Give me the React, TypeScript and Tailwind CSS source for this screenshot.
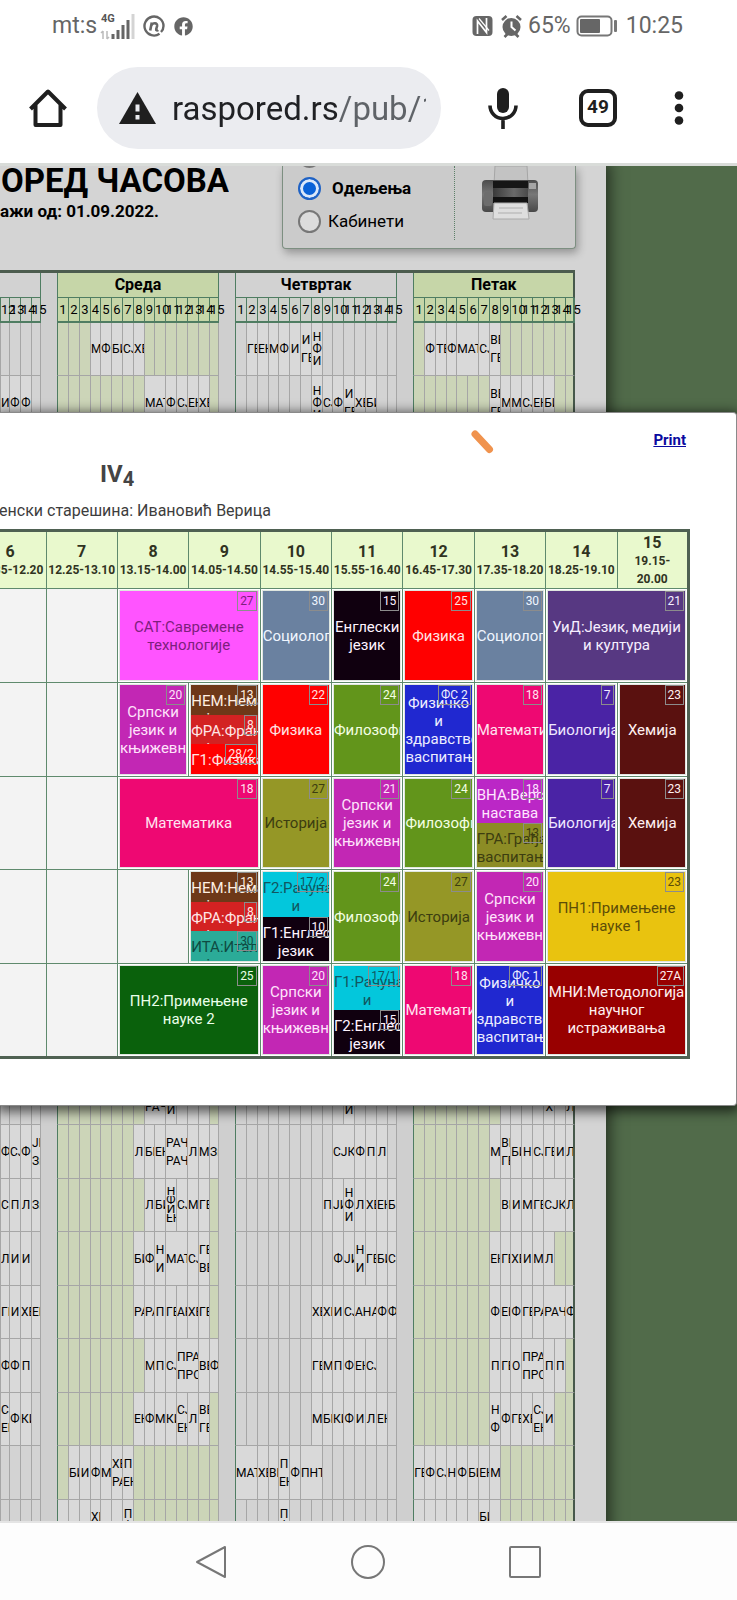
import React from "react";
import { FaFacebook } from "react-icons/fa";

type Slot = [start: number, span: number, text: string];
type Day = { filled: [number, number]; slots: Slot[] };
type Row = [Day, Day, Day, Day];

const day = (from: number, to: number, ...slots: Slot[]): Day => ({ filled: [from, to], slots });
/** Builds single-column slots that follow each other from the given lesson; "*" marks a double lesson. */
const run = (start: number, texts: string): Slot[] => {
  let at = start;
  return texts.split(" ").map((t) => {
    const span = t.startsWith("*") ? 2 : 1;
    const slot: Slot = [at, span, t.replace("*", "")];
    at += span;
    return slot;
  });
};
const lessons = (start: number, texts: string): Day => {
  const slots = run(start, texts);
  const last = slots[slots.length - 1];
  return day(start, last[0] + last[1] - 1, ...slots);
};
const none: Day = { filled: [0, -1], slots: [] };
const blank: Row = [none, none, none, none];

const rows: Row[] = [
  [none, lessons(4, "М Ф БИ СЈ ХЕ"), lessons(2, "ГЕ ЕН М Ф И И|ГЕ Н|Ф|И"), lessons(2, "Ф ТЕ Ф *МАТ СЈ ВЕ|ГЕ")],
  [lessons(12, "И Ф Ф"), lessons(9, "*МАТ Ф СЈ ЕН ХЕ"), lessons(8, "Н|Ф|И СЈ Ф И|ГЕ ХЕ БИ"), lessons(8, "ВЕ|ГЕ М М СЈ ЕН БИ")],
  ...Array.from({ length: 12 }, () => blank),
  [none, day(9, 14, [9, 2, "РАЧ|РАЧ"], [11, 1, "Н|Ф|И"]), day(0, -1, [11, 1, "Н|Ф|И"]), day(9, 15, [13, 1, "И|Х"], [15, 1, "И|Л"])],
  [lessons(12, "Ф СЈ Ф ЈИ|Зи"), lessons(8, "Л БИ ЕН *РАЧ|РАЧ Л М Зи"), lessons(10, "*СЈК Ф П Л"), lessons(8, "М ВЕ|ГЕ БИ Н СЈ ГЕ И Л")],
  [lessons(12, "СЈ П Л Зи"), lessons(9, "Л БИ Н|Ф|И|ЕН СЈ М ГЕ"), lessons(9, "П ЈИ Н|Ф|И Л ХЕ ЕН БИ"), lessons(9, "ВЕ И М ГЕ *СЈК Л")],
  [lessons(12, "Л И И"), lessons(8, "БИ Ф Н|И *МАТ СЈ ГЕ|ВЕ"), lessons(10, "Ф ЈИ Н|И ГЕ БИ СЈ"), lessons(8, "ЕН ГЕ ХЕ И М Л")],
  [lessons(12, "ГЕ И ХЕ ЕН"), lessons(8, "РА РА П ГЕ АН ХЕ ГЕ"), lessons(8, "ХЕ ХЕ И СЈ *АНА Ф Ф"), lessons(8, "Ф ЕН Ф ГЕ РА *РАЧ Ф")],
  [lessons(12, "Ф Ф П"), lessons(9, "М П СЈ *ПРА|ПРО ВЕ Ф"), lessons(8, "ГЕ М П Ф ЕН СЈ"), lessons(8, "П ГЕ О *ПРА|ПРО П П")],
  [lessons(12, "СЈ|ЕН Ф КИ"), lessons(8, "ЕН Ф М КИ СЈ|ЕН Л ВЕ|ГЕ"), lessons(8, "М БИ КИ Ф И Л ЕН"), lessons(8, "Н|Ф Ф ГЕ ХЕ СЈ|ЕН И")],
  [none, lessons(2, "БИ И Ф М ХЕ|РА П|ЕН"), lessons(1, "*МАТ ХЕ ВЕ П|ЕН Ф *ПНТ"), lessons(1, "ГЕ Ф СЈ Н Ф БИ ЕН М")],
  [none, day(1, 7, [4, 1, "ХЕ|ГЕ"], [7, 1, "П|Ф|И"]), day(0, -1, [5, 1, "П|Ф|И"]), day(1, 8, [7, 1, "БИ|ГЕ"])],
];

const days = [
  { name: "", first: 12, green: false },
  { name: "Среда", first: 1, green: true },
  { name: "Четвртак", first: 1, green: false },
  { name: "Петак", first: 1, green: true },
];

const narrowColumns = [4, 9, 15];

function lineHeight(count: number) {
  if (count <= 2) return "leading-[18px]";
  return count === 3 ? "leading-[12px]" : "leading-[9px]";
}

function DayCells({ data, index }: { data: Day; index: number }) {
  const { first, green } = days[index];
  const cells: React.ReactNode[] = [];
  for (let c = first; c <= 15; ) {
    const slot = data.slots.find((s) => s[0] === c);
    const span = slot ? slot[1] : 1;
    const filled = (c >= data.filled[0] && c <= data.filled[1]) || !!slot;
    const lines = slot ? slot[2].split("|") : [];
    const bg = filled ? "bg-[#d9d9d9]" : green ? "bg-[#ccd5b8]" : "bg-[#d3d3d3]";
    const left = c === 1 ? "border-l-[#4f7d62]" : "border-l-[#a6a6a6]";
    const last = c + span > 15;
    const right = last ? (index === 3 ? "border-r-2 border-r-[#47594b]" : "border-r border-r-[#a6a6a6]") : "";
    cells.push(
      <td key={c} colSpan={span} className={`overflow-hidden border-b border-l border-b-[#a6a6a6] p-0 text-center ${bg} ${left} ${right}`}>
        {lines.map((l, i) => (
          <div key={i} className={`overflow-hidden whitespace-nowrap ${lineHeight(lines.length)}`}>{l}</div>
        ))}
      </td>
    );
    c += span;
  }
  return <>{cells}</>;
}

function WeekTable() {
  return (
    <table className="w-[575px] table-fixed border-separate border-spacing-0 border-t-3 border-[#4c5c4e] text-[12px] text-black">
      <colgroup>
        {days.map((d, i) => (
          <React.Fragment key={i}>
            {i > 0 && <col className="w-[16px]" />}
            {Array.from({ length: 16 - d.first }, (_, k) => {
              const n = k + d.first;
              return <col key={n} className={n === 12 && i === 0 ? "w-[9px]" : narrowColumns.includes(n) ? "w-[10px]" : "w-[11px]"} />;
            })}
          </React.Fragment>
        ))}
      </colgroup>
      <thead>
        <tr className="h-[25px]">
          {days.map((d, i) => (
            <React.Fragment key={i}>
              {i > 0 && <td className="bg-[#cfcfcf] p-0" />}
              <th
                colSpan={16 - d.first}
                className={`border-b border-l border-r border-[#4f7d62] p-0 text-[16px] leading-6 font-bold ${d.green ? "bg-[#c6d6a8]" : "bg-[#d2d2d2]"} ${i === 0 ? "border-l-0" : ""} ${i === 3 ? "border-r-2 border-r-[#47594b]" : ""}`}
              >
                {d.name}
              </th>
            </React.Fragment>
          ))}
        </tr>
        <tr className="h-[25px]">
          {days.map((d, i) => (
            <React.Fragment key={i}>
              {i > 0 && <td className="bg-[#cfcfcf] p-0" />}
              {Array.from({ length: 16 - d.first }, (_, k) => {
                const n = k + d.first;
                return (
                  <th
                    key={n}
                    className={`border-b-2 border-l border-[#4f7d62] p-0 text-center text-[13px] font-normal whitespace-nowrap ${d.green ? "bg-[#c6d6a8]" : "bg-[#cdd1cb]"} ${n === 15 ? (i === 3 ? "border-r-2" : "border-r") : ""}`}
                  >
                    {n}
                  </th>
                );
              })}
            </React.Fragment>
          ))}
        </tr>
      </thead>
      <tbody>
        {rows.map((row, r) => (
          <tr key={r} className="odd:h-[53px] even:h-[54px]">
            {row.map((data, i) => (
              <React.Fragment key={i}>
                {i > 0 && <td className="bg-[#cfcfcf] p-0" />}
                <DayCells data={data} index={i} />
              </React.Fragment>
            ))}
          </tr>
        ))}
      </tbody>
    </table>
  );
}

type Lesson = { text: string; room: string; color: string };
const L = (text: string, room: string, color: string): Lesson => ({ text, room, color });

const srp = (room: string) => L("Српски језик и књижевност", room, "bg-[#c227b4] text-[#ffe3fb]");
const fiz = (room: string) => L("Физика", room, "bg-[#ff0000] text-[#ffe3e3]");
const fil = L("Филозофија", "24", "bg-[#62951b] text-[#f4ffe3]");
const mat = L("Математика", "18", "bg-[#ee0872] text-[#ffe3f0]");
const ist = L("Историја", "27", "bg-[#959726] text-[#3c3d10]");
const bio = L("Биологија", "7", "bg-[#4a23a5] text-[#efe8ff]");
const hem = L("Хемија", "23", "bg-[#5a110f] text-[#fff0f0]");
const soc = L("Социологија", "30", "bg-[#6a81a0] text-[#f0f6ff]");
const fizv = (room: string) => L("Физичко и здравствено васпитање", room, "bg-[#2028d0] text-[#eeeeff]");
const nem = L("НЕМ:Немачки језик", "13", "bg-[#6e3818] text-[#fff0e4]");
const fra = L("ФРА:Француски језик", "8", "bg-[#d32222] text-[#ffe6e6]");
const eng = "bg-[#10000f] text-[#fff4ff]";
const rac = "bg-[#03c7dc] text-[#115660]";

const week: { span: number; items: Lesson[] }[][] = [
  [
    { span: 1, items: [] }, { span: 1, items: [] },
    { span: 2, items: [L("САТ:Савремене технологије", "27", "bg-[#ff54ff] text-[#7d1f7d]")] },
    { span: 1, items: [soc] },
    { span: 1, items: [L("Енглески језик", "15", eng)] },
    { span: 1, items: [fiz("25")] },
    { span: 1, items: [soc] },
    { span: 2, items: [L("УиД:Језик, медији и култура", "21", "bg-[#573882] text-[#f6efff]")] },
  ],
  [
    { span: 1, items: [] }, { span: 1, items: [] },
    { span: 1, items: [srp("20")] },
    { span: 1, items: [nem, fra, L("Г1:Физика", "28/2", "bg-[#ff0000] text-[#ffe3e3]")] },
    { span: 1, items: [fiz("22")] }, { span: 1, items: [fil] }, { span: 1, items: [fizv("ФС 2")] },
    { span: 1, items: [mat] }, { span: 1, items: [bio] }, { span: 1, items: [hem] },
  ],
  [
    { span: 1, items: [] }, { span: 1, items: [] },
    { span: 2, items: [mat] }, { span: 1, items: [ist] }, { span: 1, items: [srp("21")] }, { span: 1, items: [fil] },
    { span: 1, items: [L("ВНА:Верска настава", "18", "bg-[#bb27c6] text-[#ffe6ff]"), L("ГРА:Грађанско васпитање", "13", "bg-[#8c8c25] text-[#3c3d10]")] },
    { span: 1, items: [bio] }, { span: 1, items: [hem] },
  ],
  [
    { span: 1, items: [] }, { span: 1, items: [] }, { span: 1, items: [] },
    { span: 1, items: [nem, fra, L("ИТА:Италијански језик", "30", "bg-[#2bab98] text-[#0f4a42]")] },
    { span: 1, items: [L("Г2:Рачунарство и", "17/2", rac), L("Г1:Енглески језик", "10", eng)] },
    { span: 1, items: [fil] }, { span: 1, items: [ist] }, { span: 1, items: [srp("20")] },
    { span: 2, items: [L("ПН1:Примењене науке 1", "23", "bg-[#e9c30f] text-[#5c4d08]")] },
  ],
  [
    { span: 1, items: [] }, { span: 1, items: [] },
    { span: 2, items: [L("ПН2:Примењене науке 2", "25", "bg-[#0a610c] text-[#eaffea]")] },
    { span: 1, items: [srp("20")] },
    { span: 1, items: [L("Г1:Рачунарство и", "17/1", rac), L("Г2:Енглески језик", "15", eng)] },
    { span: 1, items: [mat] }, { span: 1, items: [fizv("ФС 1")] },
    { span: 2, items: [L("МНИ:Методологија научног истраживања", "27А", "bg-[#980000] text-[#fff0f0]")] },
  ],
];

const periods: [string, string][] = [
  ["6", "11.35-12.20"], ["7", "12.25-13.10"], ["8", "13.15-14.00"], ["9", "14.05-14.50"], ["10", "14.55-15.40"],
  ["11", "15.55-16.40"], ["12", "16.45-17.30"], ["13", "17.35-18.20"], ["14", "18.25-19.10"], ["15", "19.15- 20.00"],
];

function LessonBlock({ lesson, alone }: { lesson: Lesson; alone: boolean }) {
  return (
    <div className={`relative flex min-h-0 flex-1 basis-0 justify-center overflow-hidden ${alone ? "items-center" : "items-start pt-[7px]"} ${lesson.color}`}>
      <div className="w-full text-center text-[15px] leading-[18px]">{lesson.text}</div>
      <span className="absolute top-0 right-px border border-[#8c8c8c] px-[2px] text-[12px] leading-[18px]">{lesson.room}</span>
    </div>
  );
}

function ClassDialog() {
  return (
    <section
      role="dialog"
      aria-label="IV4"
      className="absolute top-[246px] right-0 left-0 overflow-hidden rounded-r-[4px] border border-l-0 border-[#8a8a8a] bg-white pr-[46px] pb-[46px] shadow-[0_3px_12px_3px_rgba(0,0,0,0.6)]"
    >
      <svg className="absolute top-[15px] left-[470px] h-[28px] w-[26px]" viewBox="0 0 26 28" aria-hidden="true">
        <path d="M5 6 L19.500 21.500" stroke="#f0934e" strokeWidth="7" strokeLinecap="round" />
      </svg>
      <div className="flex justify-end pt-[17px] pr-[4px]">
        <a href="#print" className="text-[15px] leading-5 font-bold text-[#0a0aa0] underline">Print</a>
      </div>
      <h2 className="pt-[10px] pl-[100px] text-[24px] leading-7 font-bold text-[#444]">
        IV<sub className="bottom-[-4px] text-[20px]">4</sub>
      </h2>
      <div className="flex w-[271px] justify-end overflow-hidden pt-[11px] pb-[6px]">
        <p className="shrink-0 text-[16px] leading-6 whitespace-nowrap text-[#3d3d3d]">Одељенски старешина: Ивановић Верица</p>
      </div>
      <table className="w-full table-fixed border-collapse border-t-3 border-r-3 border-b-3 border-[#4f6152]">
        <colgroup>
          <col className="w-[46px]" />
          {periods.slice(1).map(([n]) => <col key={n} />)}
        </colgroup>
        <thead>
          <tr className="h-[58px]">
            {periods.map(([n, time], i) => (
              <th key={n} className={`overflow-hidden border border-[#5f8a6d] bg-[#e9f9cd] p-0 text-[#30331f] ${i === 0 ? "border-l-0" : ""}`}>
                <div className={i === 0 ? "flex justify-end" : ""}>
                  <div className={i === 0 ? "w-[71px] shrink-0" : ""}>
                    <div className="text-[16px] leading-[19px] font-bold">{n}</div>
                    <div className={`text-[12px] leading-[18px] font-bold ${n === "15" ? "px-[4px]" : "whitespace-nowrap"}`}>{time}</div>
                  </div>
                </div>
              </th>
            ))}
          </tr>
        </thead>
        <tbody>
          {week.map((row, r) => (
            <tr key={r} className={r === 2 ? "h-[93px]" : "h-[94px]"}>
              {row.map((cell, c) => (
                <td
                  key={c}
                  colSpan={cell.span}
                  className={`h-[93px] border border-[#5f8a6d] p-[1px] ${cell.items.length ? "bg-white" : "bg-[#f3f3f3]"} ${c === 0 ? "border-l-0" : ""}`}
                >
                  {cell.items.length > 0 && (
                    <div className="flex h-full flex-col border border-[#dfe6df]">
                      {cell.items.map((l, i) => <LessonBlock key={i} lesson={l} alone={cell.items.length === 1} />)}
                    </div>
                  )}
                </td>
              ))}
            </tr>
          ))}
        </tbody>
      </table>
    </section>
  );
}

function Printer() {
  return (
    <svg className="h-[58px] w-[58px]" viewBox="0 0 58 58" aria-hidden="true">
      <defs>
        <linearGradient id="body" x1="0" x2="0" y1="0" y2="1">
          <stop offset="0" stopColor="#4c4c4c" />
          <stop offset="0.45" stopColor="#777" />
          <stop offset="1" stopColor="#484848" />
        </linearGradient>
        <linearGradient id="front" x1="0" x2="1" y1="0" y2="0">
          <stop offset="0" stopColor="#3a3a3a" />
          <stop offset="0.6" stopColor="#6a6a6a" />
          <stop offset="1" stopColor="#4a4a4a" />
        </linearGradient>
      </defs>
      <path d="M14 0h32l1 18H13z" fill="#c3c3c3" stroke="#a5a5a5" />
      <rect x="1" y="14" width="56" height="32" rx="4" fill="url(#body)" />
      <rect x="12" y="15" width="35" height="7" fill="#161616" />
      <rect x="12" y="22" width="35" height="9" fill="url(#front)" />
      <rect x="12" y="31" width="35" height="6" fill="#121212" />
      <rect x="48" y="17" width="7" height="6" fill="#a5a5a5" />
      <rect x="3" y="26" width="8" height="14" rx="2" fill="#6d6d6d" />
      <path d="M13 37h33l2 16H12z" fill="#dedede" stroke="#aaa" />
      <path d="M18 42h24M17 47h24" stroke="#c6c6c6" strokeWidth="2" />
    </svg>
  );
}

function StatusBar() {
  return (
    <div className="flex h-[52px] items-center justify-between pr-[54px] pl-[52px] text-[23px] leading-7 text-[#666]">
      <div className="flex items-center">
        <span>mt:s</span>
        <svg className="mb-[2px] ml-[2px] h-[34px] w-[36px]" viewBox="0 0 36 34" aria-hidden="true">
          <text x="2" y="14" fontFamily="Roboto" fontSize="11" fontWeight="700" fill="#555">4G</text>
          <path d="M4 31v-8m-2 2 2-2M8 23v8m2-2-2 2" stroke="#bbb" strokeWidth="1.500" fill="none" />
          <path d="M14 26v5M19 22v9M24 17v14M29 12v19" stroke="#666" strokeWidth="3" />
          <path d="M34 6v25" stroke="#d4d4d4" strokeWidth="3" />
        </svg>
        <svg className="ml-[8px] h-[22px] w-[22px]" viewBox="0 0 22 22" fill="none" stroke="#666" aria-hidden="true">
          <path d="M16.500 18.800A9.500 9.500 0 1 1 20.500 11c0 2.500-1 4.500-2.500 6" strokeWidth="2.400" />
          <path d="M7.200 15.500 8.800 7.500M8.300 10.500c1.500-3 6.500-3 5.800.5l-.9 3.200c-.2 1.300 1 1.600 2 .8" strokeWidth="2.600" />
        </svg>
        <FaFacebook className="ml-[9px] size-[19px]" />
      </div>
      <div className="flex items-center">
        <svg className="h-[22px] w-[21px]" viewBox="0 0 21 22" aria-hidden="true">
          <rect x="0.500" y="1" width="20" height="20" rx="4" fill="#666" />
          <path d="M5.500 19V6l9 11.500V3" stroke="#fff" strokeWidth="1.700" fill="none" />
          <path d="M7 3.500l10 12" stroke="#fff" strokeWidth="1.200" fill="none" />
        </svg>
        <svg className="ml-[7px] h-[24px] w-[23px]" viewBox="0 0 22 24" aria-hidden="true">
          <circle cx="11" cy="13" r="9" fill="#666" />
          <path d="M1.500 6 6 2M20.500 6 16 2M4 23l3-3M18 23l-3-3" stroke="#666" strokeWidth="2.600" />
          <path d="M11 7.500V13l4 3.500" stroke="#fff" strokeWidth="2" fill="none" />
        </svg>
        <span className="ml-[5px]">65%</span>
        <svg className="ml-[5px] h-[22px] w-[42px]" viewBox="0 0 42 22" aria-hidden="true">
          <rect x="1.500" y="1.500" width="34" height="19" rx="4" fill="none" stroke="#777" strokeWidth="2" />
          <rect x="4" y="4" width="20" height="14" rx="1" fill="#666" />
          <rect x="38" y="5" width="3" height="12" rx="1" fill="#777" />
        </svg>
        <span className="ml-[8px]">10:25</span>
      </div>
    </div>
  );
}

function BrowserBar() {
  return (
    <div className="flex h-[111px] items-center pl-[28px]">
      <button type="button" aria-label="Home" className="shrink-0">
        <svg className="h-[42px] w-[40px]" viewBox="0 0 40 42" fill="none" stroke="#1f1f1f" strokeWidth="4" strokeLinejoin="round">
          <path d="M2.500 22 20 4.500 37.500 22M7.500 18v20h25V18" />
        </svg>
      </button>
      <div className="ml-[29px] flex h-[82px] min-w-0 flex-1 items-center overflow-hidden rounded-full bg-[#ebecf0] pr-[15px] pl-[22px]">
        <svg className="h-[32px] w-[37px] shrink-0" viewBox="0 0 37 32" aria-hidden="true">
          <path d="M18.500 0 37 32H0z" fill="#1f1f1f" />
          <path d="M18.500 12.500v7M18.500 23v4.500" stroke="#ebecf0" strokeWidth="4" />
        </svg>
        <input
          aria-label="Address"
          readOnly
          value="raspored.rs/pub/1"
          className="mt-[2px] ml-[16px] h-[48px] w-full min-w-0 bg-[linear-gradient(90deg,#202124_165px,#5f6368_165px)] bg-clip-text text-[33px] text-transparent"
        />
      </div>
      <button type="button" aria-label="Voice search" className="ml-[46px] shrink-0">
        <svg className="h-[42px] w-[32px]" viewBox="0 0 32 42" fill="none" stroke="#1f1f1f">
          <rect x="10" y="1" width="12" height="25" rx="6" fill="#1f1f1f" stroke="none" />
          <path d="M3 18.500a13 13 0 0 0 26 0M16 32v10" strokeWidth="3.600" />
        </svg>
      </button>
      <button type="button" aria-label="Tabs" className="ml-[60px] flex size-[38px] shrink-0 items-center justify-center rounded-[9px] border-4 border-[#1f1f1f] text-[19px] font-bold text-[#1f1f1f]">
        49
      </button>
      <button type="button" aria-label="Menu" className="mr-[53px] ml-[57px] shrink-0">
        <svg className="h-[36px] w-[10px]" viewBox="0 0 10 36" fill="#1f1f1f">
          <circle cx="5" cy="5.500" r="4.300" />
          <circle cx="5" cy="18" r="4.300" />
          <circle cx="5" cy="30.500" r="4.300" />
        </svg>
      </button>
    </div>
  );
}

const radio =
  "size-[23px] shrink-0 appearance-none rounded-full border-2 border-[#777] bg-[#dcdcdc] checked:border-[#1f62c4] checked:bg-[#0a62d8] checked:shadow-[inset_0_0_0_3px_#dbe8fa]";

export default function App() {
  return (
    <div className="flex h-screen flex-col overflow-hidden bg-white font-['Roboto',sans-serif]">
      <header className="shrink-0 border-b-3 border-[#d9dcd9]">
        <StatusBar />
        <BrowserBar />
      </header>
      <main className="relative min-h-0 flex-1 overflow-hidden bg-[#516b4a]">
        <div className="w-[606px] bg-[#d4d4d4] shadow-[0_0_14px_4px_rgba(0,0,0,0.55)]">
          <div className="flex h-[104px] items-start justify-between pr-[30px]">
            <div className="flex w-[229px] flex-col overflow-hidden">
              <h1 className="self-end text-[33px] leading-[30px] font-bold whitespace-nowrap text-black">РАСПОРЕД ЧАСОВА</h1>
              <p className="w-[159px] self-start text-[17px] leading-[30px] font-bold text-black">
                <span className="float-right whitespace-nowrap">Важи од: 01.09.2022.</span>
              </p>
            </div>
            <div className="flex h-[83px] w-[294px] rounded-b-[4px] border border-t-0 border-[#7d8f81] bg-[#cbcbcb] shadow-[2px_4px_8px_rgba(0,0,0,0.3)]">
              <div className="mb-[8px] flex flex-1 flex-col border-r border-dotted border-[#5d8068] pl-[15px] text-[17px] text-black">
                <input type="radio" name="view" aria-label="Наставници" className={`-mt-[21px] ${radio}`} />
                <label className="mt-[9px] flex h-[23px] items-center gap-[11px] font-bold">
                  <input type="radio" name="view" defaultChecked className={radio} />
                  Одељења
                </label>
                <label className="mt-[10px] flex h-[23px] items-center gap-[7px]">
                  <input type="radio" name="view" className={radio} />
                  Кабинети
                </label>
              </div>
              <div className="w-[120px] pl-[26px]">
                <Printer />
              </div>
            </div>
          </div>
          <WeekTable />
        </div>
        <ClassDialog />
      </main>
      <nav className="flex h-[79px] shrink-0 items-center justify-center gap-[123px] border-t-2 border-[#e4e4e4] bg-[#fdfdfd] pr-[2px]">
        <button type="button" aria-label="Back">
          <svg className="size-[34px]" viewBox="0 0 34 34" fill="none" stroke="#777" strokeWidth="2" strokeLinejoin="round">
            <path d="M31 2v30L3 17z" />
          </svg>
        </button>
        <button type="button" aria-label="Home screen">
          <svg className="size-[34px]" viewBox="0 0 34 34" fill="none" stroke="#777" strokeWidth="2">
            <circle cx="17" cy="17" r="16" />
          </svg>
        </button>
        <button type="button" aria-label="Recent apps">
          <svg className="size-[34px]" viewBox="0 0 34 34" fill="none" stroke="#777" strokeWidth="2">
            <rect x="2" y="2" width="30" height="30" rx="1" />
          </svg>
        </button>
      </nav>
    </div>
  );
}
